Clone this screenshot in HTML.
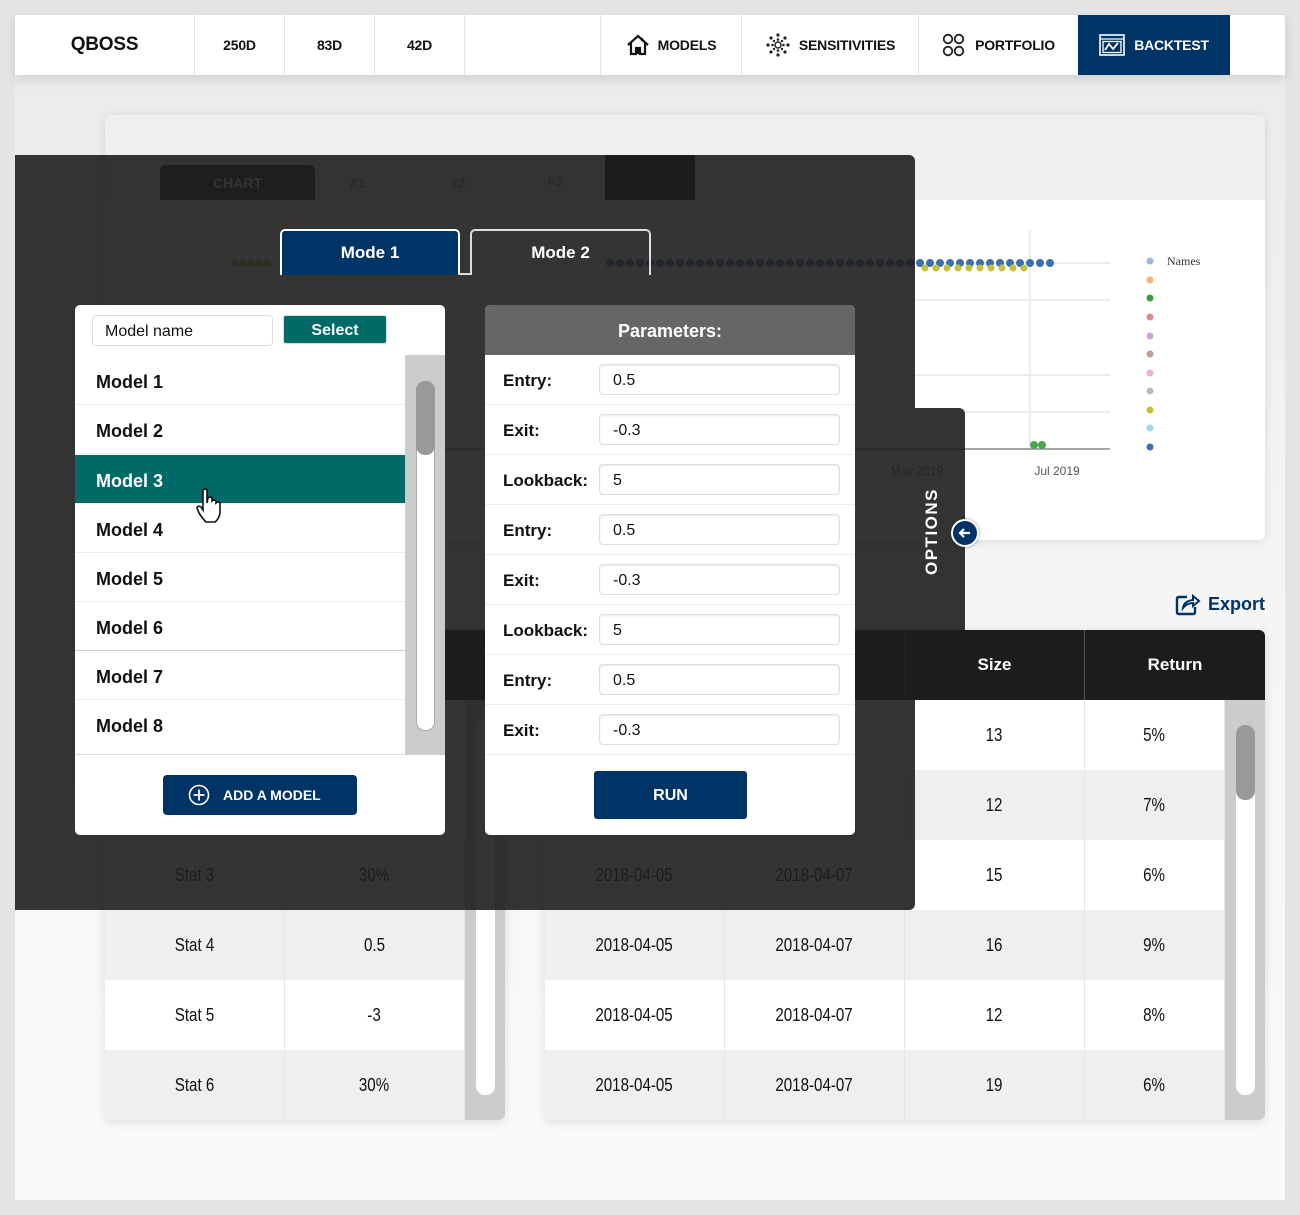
<!DOCTYPE html>
<html><head><meta charset="utf-8"><style>
*{box-sizing:border-box;margin:0;padding:0}
body{width:1300px;height:1215px;background:#e4e4e4;position:relative;overflow:hidden;font-family:"Liberation Sans",sans-serif;color:#111}
.a{position:absolute}
.main{left:15px;top:75px;width:1270px;height:1125px;background:linear-gradient(#ebebeb,#f4f4f4 40%,#fafafa)}
.nav{left:15px;top:15px;width:1270px;height:60px;background:#fff;box-shadow:0 4px 10px rgba(0,0,0,.12)}
.nc{position:absolute;top:0;height:60px;border-right:1px solid #e2e2e2;display:flex;align-items:center;justify-content:center;font-weight:bold;font-size:14px;letter-spacing:-.2px}
.card{left:105px;top:115px;width:1160px;height:425px;background:#fff;border-radius:6px;box-shadow:0 2px 10px rgba(0,0,0,.1);overflow:hidden}
.tbl{background:#fff;box-shadow:0 2px 10px rgba(0,0,0,.12);border-radius:6px;overflow:hidden}
.hd{position:absolute;top:0;height:70px;background:#1c1c1c;color:#fff;font-weight:bold;font-size:17px;display:flex;align-items:center;justify-content:center;border-right:1px solid #555}
.cell{position:absolute;height:70px;display:flex;align-items:center;justify-content:center;font-family:"Liberation Sans Narrow","Liberation Sans",sans-serif;font-size:18px;border-right:1px solid #e6e6e6}
.cell span{display:inline-block;transform:scaleX(.84)}
.ov{left:15px;top:155px;width:900px;height:755px;background:rgba(30,30,30,.9);border-radius:0 6px 6px 0}
.panel{background:#fff;border-radius:5px;overflow:hidden}
.mrow{position:absolute;left:0;width:330px;height:49px;border-bottom:1px solid #ececec;font-weight:bold;font-size:18px;padding-left:21px;padding-top:4px;display:flex;align-items:center}
.prow{position:absolute;left:0;width:370px;height:50px;border-bottom:1px solid #ececec;font-weight:bold;font-size:17px;padding-left:18px;padding-top:3px;display:flex;align-items:center}
.inp{position:absolute;left:114px;top:9px;width:241px;height:31px;border:1.5px solid #ddd;border-radius:4px;font-weight:normal;font-size:16px;padding-left:13px;padding-top:2px;display:flex;align-items:center;box-shadow:inset 0 1px 2px rgba(0,0,0,.08)}
</style></head><body>
<div class="a main"></div>
<div class="a nav">
 <div class="nc" style="left:0;width:180px;font-size:19px">QBOSS</div>
 <div class="nc" style="left:180px;width:90px">250D</div>
 <div class="nc" style="left:270px;width:90px">83D</div>
 <div class="nc" style="left:360px;width:90px">42D</div>
 <div class="nc" style="left:450px;width:136px"></div>
 <div class="nc" style="left:586px;width:141px"><svg width="24" height="24" viewBox="0 0 24 24" style="margin-right:8px"><path d="M2 12 L12 3 L22 12 M5 10 V21 H10 V15 H14 V21 H19 V10 M16 5 V8" fill="none" stroke="#111" stroke-width="2.2"/><rect x="10" y="15" width="4" height="6" fill="#111"/></svg>MODELS</div>
 <div class="nc" style="left:727px;width:177px"><svg width="26" height="26" viewBox="0 0 26 26" style="margin-right:8px"><g fill="#222"><circle cx="13" cy="13" r="3" fill="none" stroke="#222" stroke-width="1.5"/><circle cx="13" cy="3" r="1.6"/><circle cx="13" cy="23" r="1.6"/><circle cx="3" cy="13" r="1.6"/><circle cx="23" cy="13" r="1.6"/><circle cx="6" cy="6" r="1.6"/><circle cx="20" cy="6" r="1.6"/><circle cx="6" cy="20" r="1.6"/><circle cx="20" cy="20" r="1.6"/><circle cx="13" cy="7.5" r="1.3"/><circle cx="13" cy="18.5" r="1.3"/><circle cx="7.5" cy="13" r="1.3"/><circle cx="18.5" cy="13" r="1.3"/><circle cx="9" cy="9" r="1.2"/><circle cx="17" cy="9" r="1.2"/><circle cx="9" cy="17" r="1.2"/><circle cx="17" cy="17" r="1.2"/></g></svg>SENSITIVITIES</div>
 <div class="nc" style="left:904px;width:160px"><svg width="24" height="26" viewBox="0 0 24 26" style="margin-right:9px"><g fill="none" stroke="#222" stroke-width="1.8"><circle cx="6" cy="7" r="4.3"/><circle cx="17" cy="7" r="4.3"/><circle cx="6" cy="19" r="4.3"/><circle cx="17" cy="19" r="4.3"/></g></svg>PORTFOLIO</div>
 <div class="nc" style="left:1063px;width:152px;background:#003366;color:#fff;border:none"><svg width="26" height="22" viewBox="0 0 26 22" style="margin-right:9px"><rect x="1" y="1" width="24" height="20" fill="none" stroke="#fff" stroke-width="1.6"/><line x1="1" y1="5" x2="25" y2="5" stroke="#fff" stroke-width="1.3"/><rect x="4" y="7.5" width="18" height="11" fill="none" stroke="#fff" stroke-width="1.3"/><path d="M6 16 L10 10 L14 15 L19 9" fill="none" stroke="#fff" stroke-width="1.8"/></svg>BACKTEST</div>
</div>

<div class="a card">
 <div class="a" style="left:0;top:0;width:1160px;height:85px;background:#efefef"></div>
 <div class="a" style="left:55px;top:50px;width:155px;height:35px;background:#1c2026;border-radius:6px 6px 0 0;color:#fff;font-weight:bold;font-size:14px;display:flex;align-items:center;justify-content:center">CHART</div>
 <div class="a" style="left:245px;top:60px;color:#888;font-size:14px;font-weight:bold">#1</div>
 <div class="a" style="left:345px;top:60px;color:#888;font-size:14px;font-weight:bold">#2</div>
 <div class="a" style="left:442px;top:58px;color:#888;font-size:14px;font-weight:bold">#3</div>
 <div class="a" style="left:500px;top:40px;width:90px;height:45px;background:#111"></div>
 <svg class="a" style="left:0;top:85px" width="1160" height="340">
  <g stroke="#ececec" stroke-width="2"><line x1="80" y1="63" x2="1005" y2="63"/><line x1="80" y1="100" x2="1005" y2="100"/><line x1="80" y1="175" x2="1005" y2="175"/><line x1="80" y1="212" x2="1005" y2="212"/><line x1="925" y1="30" x2="925" y2="250"/></g>
  <line x1="80" y1="249" x2="1005" y2="249" stroke="#888" stroke-width="1.5"/>
  <line x1="505" y1="63" x2="955" y2="63" stroke="#3a6fb0" stroke-width="8" stroke-linecap="round" stroke-dasharray="0 10"/>
  <line x1="820" y1="68" x2="930" y2="68" stroke="#c4c03a" stroke-width="7" stroke-linecap="round" stroke-dasharray="0 11"/>
  <line x1="130" y1="63" x2="170" y2="63" stroke="#c4c03a" stroke-width="7" stroke-linecap="round" stroke-dasharray="0 8"/>
  <circle cx="929" cy="245" r="4" fill="#4aa84a"/><circle cx="937" cy="245" r="4" fill="#4aa84a"/>
  <text x="952" y="275" font-size="12" fill="#555" text-anchor="middle" font-family="Liberation Sans">Jul 2019</text>
  <text x="812" y="275" font-size="12" fill="#555" text-anchor="middle" font-family="Liberation Sans">May 2019</text>
  <g><circle cx="1045" cy="61" r="3.5" fill="#9cb9d8"/><circle cx="1045" cy="80" r="3.5" fill="#f1b47f"/><circle cx="1045" cy="98" r="3.5" fill="#3f9a3f"/><circle cx="1045" cy="117" r="3.5" fill="#db8a8f"/><circle cx="1045" cy="136" r="3.5" fill="#c6a6d9"/><circle cx="1045" cy="154" r="3.5" fill="#bda196"/><circle cx="1045" cy="173" r="3.5" fill="#eab1d5"/><circle cx="1045" cy="191" r="3.5" fill="#bbb"/><circle cx="1045" cy="210" r="3.5" fill="#c4c03a"/><circle cx="1045" cy="228" r="3.5" fill="#9ed9e8"/><circle cx="1045" cy="247" r="3.5" fill="#3a6fb0"/></g>
  <text x="1062" y="65" font-size="12" fill="#333" font-family="Liberation Serif">Names</text>
 </svg>
</div>

<div class="a" style="left:1175px;top:592px;display:flex;align-items:center;color:#003366;font-weight:bold;font-size:18px"><svg width="26" height="24" viewBox="0 0 26 24" style="margin-right:7px"><path d="M12 5 H4 Q2 5 2 7 V20 Q2 22 4 22 H18 Q20 22 20 20 V15" fill="none" stroke="#003366" stroke-width="2.4"/><path d="M8 16 Q9 9 18 8 V4 L24 9 L18 14 V11 Q12 11 8 16Z" fill="none" stroke="#003366" stroke-width="2"/></svg>Export</div>

<!-- left table -->
<div class="a tbl" style="left:105px;top:630px;width:400px;height:490px">
 <div class="hd" style="left:0;width:180px"></div><div class="hd" style="left:180px;width:220px;border:none"></div>
 <div class="a" style="left:360px;top:70px;width:40px;height:420px;background:#ccc"></div>
 <div class="a" style="left:371px;top:90px;width:19px;height:375px;background:#fff;border-radius:9px"></div>
 <div class="cell" style="left:0;top:210px;width:180px"><span>Stat 3</span></div><div class="cell" style="left:180px;top:210px;width:180px"><span>30%</span></div>
 <div class="cell" style="left:0;top:280px;width:180px;background:#efefef"><span>Stat 4</span></div><div class="cell" style="left:180px;top:280px;width:180px;background:#efefef"><span>0.5</span></div>
 <div class="cell" style="left:0;top:350px;width:180px"><span>Stat 5</span></div><div class="cell" style="left:180px;top:350px;width:180px"><span>-3</span></div>
 <div class="cell" style="left:0;top:420px;width:180px;background:#efefef"><span>Stat 6</span></div><div class="cell" style="left:180px;top:420px;width:180px;background:#efefef"><span>30%</span></div>
</div>

<!-- right table -->
<div class="a tbl" style="left:545px;top:630px;width:720px;height:490px">
 <div class="hd" style="left:0;width:180px"></div><div class="hd" style="left:180px;width:180px"></div>
 <div class="hd" style="left:360px;width:180px">Size</div><div class="hd" style="left:540px;width:180px;border:none">Return</div>
 <div class="a" style="left:680px;top:70px;width:40px;height:420px;background:#ccc"></div>
 <div class="a" style="left:691px;top:95px;width:19px;height:370px;background:#fff;border-radius:9px"></div>
 <div class="a" style="left:691px;top:95px;width:19px;height:75px;background:#999;border-radius:9px"></div>
 <div class="cell" style="left:0;top:70px;width:180px"></div><div class="cell" style="left:180px;top:70px;width:180px"></div><div class="cell" style="left:360px;top:70px;width:180px"><span>13</span></div><div class="cell" style="left:540px;top:70px;width:140px"><span>5%</span></div>
 <div class="cell" style="left:0;top:140px;width:180px;background:#efefef"></div><div class="cell" style="left:180px;top:140px;width:180px;background:#efefef"></div><div class="cell" style="left:360px;top:140px;width:180px;background:#efefef"><span>12</span></div><div class="cell" style="left:540px;top:140px;width:140px;background:#efefef"><span>7%</span></div>
 <div class="cell" style="left:0;top:210px;width:180px"><span>2018-04-05</span></div><div class="cell" style="left:180px;top:210px;width:180px"><span>2018-04-07</span></div><div class="cell" style="left:360px;top:210px;width:180px"><span>15</span></div><div class="cell" style="left:540px;top:210px;width:140px"><span>6%</span></div>
 <div class="cell" style="left:0;top:280px;width:180px;background:#efefef"><span>2018-04-05</span></div><div class="cell" style="left:180px;top:280px;width:180px;background:#efefef"><span>2018-04-07</span></div><div class="cell" style="left:360px;top:280px;width:180px;background:#efefef"><span>16</span></div><div class="cell" style="left:540px;top:280px;width:140px;background:#efefef"><span>9%</span></div>
 <div class="cell" style="left:0;top:350px;width:180px"><span>2018-04-05</span></div><div class="cell" style="left:180px;top:350px;width:180px"><span>2018-04-07</span></div><div class="cell" style="left:360px;top:350px;width:180px"><span>12</span></div><div class="cell" style="left:540px;top:350px;width:140px"><span>8%</span></div>
 <div class="cell" style="left:0;top:420px;width:180px;background:#efefef"><span>2018-04-05</span></div><div class="cell" style="left:180px;top:420px;width:180px;background:#efefef"><span>2018-04-07</span></div><div class="cell" style="left:360px;top:420px;width:180px;background:#efefef"><span>19</span></div><div class="cell" style="left:540px;top:420px;width:140px;background:#efefef"><span>6%</span></div>
</div>

<!-- overlay -->
<div class="a ov"></div>
<div class="a" style="left:915px;top:408px;width:50px;height:222px;background:rgba(30,30,30,.9);border-radius:0 6px 0 0"></div>
<div class="a" style="left:922px;top:575px;transform:rotate(-90deg);transform-origin:0 0;color:#fff;font-size:17px;letter-spacing:1.5px;font-weight:bold">OPTIONS</div>
<div class="a" style="left:951px;top:519px;width:28px;height:28px;border-radius:50%;background:#003366;border:2px solid #fff;box-shadow:0 0 3px rgba(0,0,0,.4)"><svg width="24" height="24" viewBox="0 0 24 24"><path d="M17 12 H7 M11 8 L7 12 L11 16" fill="none" stroke="#fff" stroke-width="2.2"/></svg></div>

<div class="a" style="left:280px;top:229px;width:180px;height:46px;background:#003366;border:2px solid #fff;border-bottom:none;border-radius:5px 5px 0 0;color:#fff;font-weight:bold;font-size:17px;display:flex;align-items:center;justify-content:center">Mode 1</div>
<div class="a" style="left:470px;top:229px;width:181px;height:46px;border:2px solid #ddd;border-bottom:none;border-radius:5px 5px 0 0;color:#fff;font-weight:bold;font-size:17px;display:flex;align-items:center;justify-content:center">Mode 2</div>
<div class="a" style="left:458px;top:273px;width:14px;height:2px;background:#ddd"></div>

<!-- model panel -->
<div class="a panel" style="left:75px;top:305px;width:370px;height:530px">
 <div class="a" style="left:17px;top:10px;width:181px;height:31px;border:1.5px solid #ddd;border-radius:4px;font-size:16px;padding-left:12px;padding-top:2px;display:flex;align-items:center">Model name</div>
 <div class="a" style="left:208px;top:10px;width:104px;height:29px;background:#006a66;border:1px solid #cfe0df;border-radius:3px;color:#fff;font-weight:bold;font-size:16px;padding-top:2px;display:flex;align-items:center;justify-content:center">Select</div>
 <div class="mrow" style="top:51px">Model 1</div>
 <div class="mrow" style="top:100px">Model 2</div>
 <div class="mrow" style="top:150px;background:#006a66;color:#fff">Model 3</div>
 <div class="mrow" style="top:199px">Model 4</div>
 <div class="mrow" style="top:248px">Model 5</div>
 <div class="mrow" style="top:297px;border-bottom-color:#ccc">Model 6</div>
 <div class="mrow" style="top:346px">Model 7</div>
 <div class="mrow" style="top:395px;height:55px;border-bottom:1px solid #ddd;padding-bottom:6px">Model 8</div>
 <div class="a" style="left:330px;top:50px;width:40px;height:400px;background:#ccc"></div>
 <div class="a" style="left:341px;top:76px;width:19px;height:350px;background:#fff;border-radius:9px;border:1px solid #aaa"></div>
 <div class="a" style="left:341px;top:76px;width:19px;height:74px;background:#999;border-radius:9px"></div>
 <svg class="a" style="left:120px;top:182px" width="30" height="38" viewBox="0 0 30 38"><path d="M8 3 Q10 1 12 3 V16 L13 11 Q15 9 17 11 V14 Q19 12 21 14 V16 Q23 14 25 16 V26 Q24 32 20 35 H11 Q8 32 4 26 L2 21 Q3 18 6 20 L8 23Z" fill="#fff" stroke="#111" stroke-width="1.6"/></svg>
 <div class="a" style="left:88px;top:470px;width:194px;height:40px;background:#003366;border-radius:4px;color:#fff;font-weight:bold;font-size:14px;display:flex;align-items:center;padding-left:25px"><svg width="22" height="22" viewBox="0 0 22 22" style="margin-right:13px"><circle cx="11" cy="11" r="9.5" fill="none" stroke="#fff" stroke-width="1.6"/><path d="M11 5.5 V16.5 M5.5 11 H16.5" stroke="#fff" stroke-width="1.8"/></svg>ADD A MODEL</div>
</div>

<!-- params panel -->
<div class="a panel" style="left:485px;top:305px;width:370px;height:530px">
 <div class="a" style="left:0;top:0;width:370px;height:50px;background:#666;color:#fff;font-weight:bold;font-size:18px;padding-top:3px;display:flex;align-items:center;justify-content:center">Parameters:</div>
 <div class="prow" style="top:50px">Entry:<div class="inp">0.5</div></div>
 <div class="prow" style="top:100px">Exit:<div class="inp">-0.3</div></div>
 <div class="prow" style="top:150px">Lookback:<div class="inp">5</div></div>
 <div class="prow" style="top:200px">Entry:<div class="inp">0.5</div></div>
 <div class="prow" style="top:250px">Exit:<div class="inp">-0.3</div></div>
 <div class="prow" style="top:300px">Lookback:<div class="inp">5</div></div>
 <div class="prow" style="top:350px">Entry:<div class="inp">0.5</div></div>
 <div class="prow" style="top:400px">Exit:<div class="inp">-0.3</div></div>
 <div class="a" style="left:109px;top:466px;width:153px;height:48px;background:#003366;border-radius:3px;color:#fff;font-weight:bold;font-size:16px;padding-top:2px;display:flex;align-items:center;justify-content:center">RUN</div>
</div>
</body></html>
